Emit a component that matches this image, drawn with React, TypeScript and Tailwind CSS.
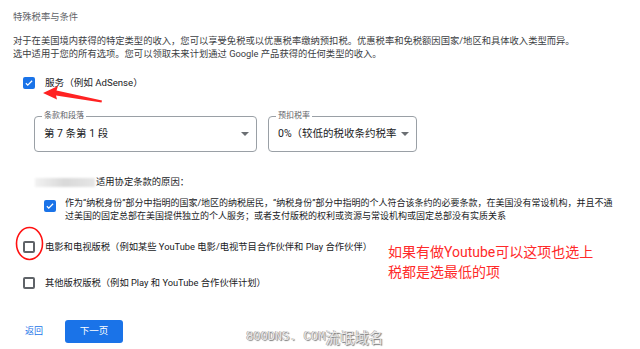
import React from 'react';

function Box({ checked, className = '' }: { checked?: boolean; className?: string }) {
  if (checked) {
    return (
      <span className={`flex h-[12px] w-[12px] shrink-0 items-center justify-center rounded-[2px] bg-[#1a73e8] ${className}`}>
        <svg width="10" height="10" viewBox="0 0 24 24">
          <path d="M4.5 12.5l4.5 4.5 10.5-10.5" fill="none" stroke="#fff" strokeWidth="3" />
        </svg>
      </span>
    );
  }
  return <span className={`block h-[12px] w-[12px] shrink-0 rounded-[2px] border-2 border-[#5f6368] ${className}`} />;
}

function Caret() {
  return (
    <svg width="8" height="4" viewBox="0 0 8 4" className="shrink-0">
      <path d="M0 0h8L4 4z" fill="#6b6f73" />
    </svg>
  );
}

function Select({ label, value, width }: { label: string; value: string; width: string }) {
  return (
    <div className={`relative flex h-[36px] items-center justify-between rounded-[4px] border border-[#9aa0a6] pl-[9px] pr-[7px] ${width}`}>
      <span className="absolute -top-[6px] left-[7px] bg-white px-[2px] text-[8px] leading-[10px] text-[#5f6368]">{label}</span>
      <span className="whitespace-nowrap text-[10.5px] text-[#202124]">{value}</span>
      <Caret />
    </div>
  );
}

export default function App() {
  return (
    <div
      className="relative h-[349px] w-[640px] overflow-hidden bg-white px-[13px] pt-[10px] text-[#3c4043]"
      style={{ fontFamily: 'Roboto, "Noto Sans CJK SC", sans-serif' }}
    >
      {/* Header */}
      <div className="text-[9.3px] leading-[14px] text-[#5f6368]">特殊税率与条件</div>
      <div className="mt-[10px] text-[9.3px] leading-[13px]">
        <div className="whitespace-nowrap">对于在美国境内获得的特定类型的收入，您可以享受免税或以优惠税率缴纳预扣税。优惠税率和免税额因国家/地区和具体收入类型而异。</div>
        <div className="whitespace-nowrap">选中适用于您的所有选项。您可以领取未来计划通过 Google 产品获得的任何类型的收入。</div>
      </div>

      {/* Services */}
      <div className="mt-[17px] ml-[10px] flex items-center gap-[10px]">
        <Box checked />
        <span className="text-[9.6px] leading-[12px] text-[#202124]">服务（例如 AdSense）</span>
      </div>

      <div className="mt-[27px] ml-[21px] flex gap-[11px]">
        <Select label="条款和段落" value="第 7 条第 1 段" width="w-[223px]" />
        <Select label="预扣税率" value="0%（较低的税收条约税率" width="w-[149px]" />
      </div>

      <div className="mt-[24px] ml-[22px] flex items-center text-[9.3px] leading-[12px] text-[#202124]">
        <span className="mr-[1px] block h-[9px] w-[60px] bg-gradient-to-r from-[#f2f2f2] via-[#d9d9d9] to-[#e6e6e6] blur-[1px]" />
        <span>适用协定条款的原因：</span>
      </div>

      <div className="mt-[9px] ml-[31px] flex items-start gap-[9px]">
        <Box checked className="mt-[3px]" />
        <div className="text-[9px] leading-[12.5px] text-[#202124]">
          <div className="whitespace-nowrap">作为“纳税身份”部分中指明的国家/地区的纳税居民，“纳税身份”部分中指明的个人符合该条约的必要条款，在美国没有常设机构，并且不通</div>
          <div className="whitespace-nowrap">过美国的固定总部在美国提供独立的个人服务；或者支付版税的权利或资源与常设机构或固定总部没有实质关系</div>
        </div>
      </div>

      <div className="mt-[19px] ml-[10px] flex items-center gap-[10px]">
        <Box />
        <span className="whitespace-nowrap text-[9.3px] leading-[12px] text-[#202124]">电影和电视版税（例如某些 YouTube 电影/电视节目合作伙伴和 Play 合作伙伴）</span>
      </div>

      <div className="mt-[24px] ml-[10px] flex items-center gap-[10px]">
        <Box />
        <span className="whitespace-nowrap text-[9.3px] leading-[12px] text-[#202124]">其他版权版税（例如 Play 和 YouTube 合作伙伴计划）</span>
      </div>

      {/* Footer */}
      <div className="mt-[31px] ml-[12px] flex items-center gap-[22px]">
        <span className="text-[9px] text-[#1a73e8]">返回</span>
        <button className="flex h-[23px] w-[58px] items-center justify-center rounded-[3px] bg-[#1a73e8] text-[9.5px] text-white">下一页</button>
      </div>

      {/* Annotations */}
      <svg className="pointer-events-none absolute left-0 top-0" width="640" height="349">
        <polygon points="43,93 58,86 56.5,90.5 102,100.5 101.5,102.5 56,95.5 57,99.5" fill="#f22" />
        <ellipse cx="29.5" cy="243.5" rx="13" ry="16" fill="none" stroke="#f11" strokeWidth="1.6" />
      </svg>
      <div className="absolute left-[388px] top-[242px] text-[14px] leading-[20px] text-[#ff2a2a]">
        <div className="whitespace-nowrap">如果有做Youtube可以这项也选上</div>
        <div className="whitespace-nowrap">税都是选最低的项</div>
      </div>
      <div className="absolute left-[246px] top-[329px] flex items-center whitespace-nowrap text-[#e8e8e8] [text-shadow:1px_1px_1px_#777,-0.5px_-0.5px_0_#999]">
        <span className="text-[12px] leading-[16px]" style={{ fontFamily: '"Liberation Mono", monospace' }}>800DNS. COM</span>
        <span className="text-[14.5px] leading-[16px]" style={{ fontFamily: '"Noto Sans CJK SC", sans-serif' }}>流氓域名</span>
      </div>
    </div>
  );
}
